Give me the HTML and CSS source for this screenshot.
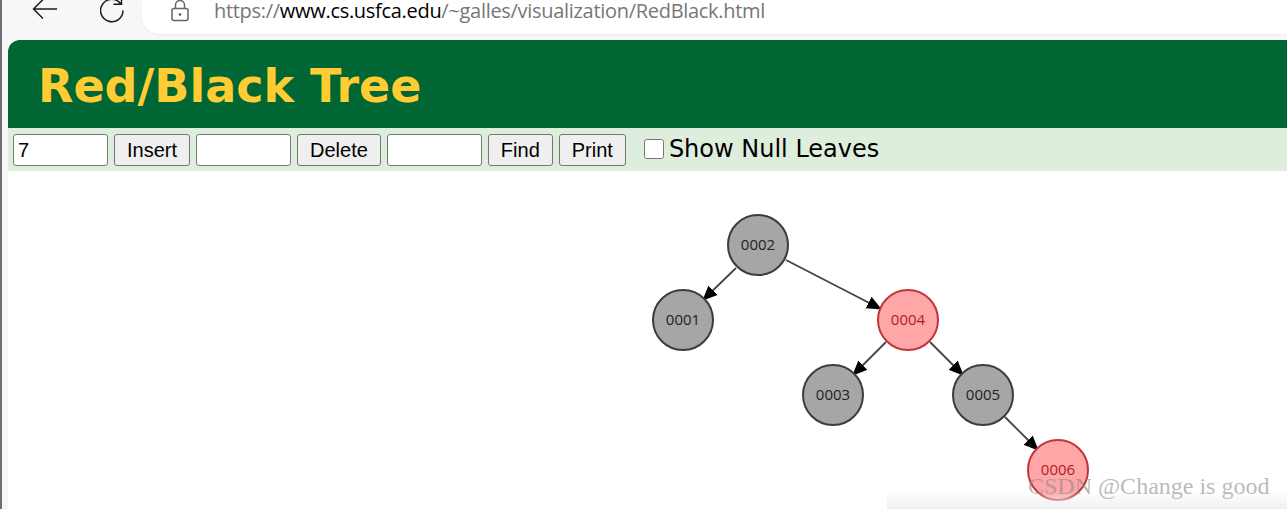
FILE: index.html
```html
<!DOCTYPE html>
<html lang="en">
<head>
<meta charset="utf-8">
<title>Red/Black Tree</title>
<link rel="stylesheet" href="styles.css">
</head>
<body>
<div class="chrome">
  <svg class="nav-icon back" width="28" height="24" viewBox="0 0 28 24"><path d="M1.5 10H25M11 .5 1.5 10l9.500 9.500" fill="none" stroke="#1c1c1c" stroke-width="1.500"/></svg>
  <svg class="nav-icon reload" width="26" height="24" viewBox="0 0 26 24"><path d="M20.500 4.500A11.200 11.200 0 1 0 23 11.500M21.500 -3v8.200h-8" fill="none" stroke="#1c1c1c" stroke-width="1.500"/></svg>
  <div class="address">
    <svg class="lock" width="18" height="22" viewBox="0 0 18 22"><path d="M4.500 8.500V5a4.500 4.500 0 0 1 9 0v3.500" fill="none" stroke="#666" stroke-width="1.500"/><rect x="1" y="8.500" width="16" height="12" rx="2" fill="none" stroke="#666" stroke-width="1.500"/><circle cx="9" cy="14.500" r="1.300" fill="#555"/></svg>
    <span class="url"><span class="dim">https://</span>www.cs.usfca.edu<span class="dim">/~galles/visualization/RedBlack.html</span></span>
  </div>
</div>
<main class="page">
  <header class="banner"><h1>Red/Black Tree</h1></header>
  <form class="controls">
    <input class="field" type="text" value="7">
    <button class="btn" type="button">Insert</button>
    <input class="field" type="text">
    <button class="btn" type="button">Delete</button>
    <input class="field" type="text">
    <button class="btn" type="button">Find</button>
    <button class="btn" type="button">Print</button>
    <label class="toggle"><input class="check" type="checkbox">Show Null Leaves</label>
  </form>
  <div class="stage">
    <svg class="tree" width="1279" height="338" viewBox="8 171 1279 338">
      <defs>
        <marker id="arrow" markerUnits="userSpaceOnUse" markerWidth="16" markerHeight="16" refX="14" refY="8" orient="auto"><path d="M0 1.500 15 8 0 14.500z" fill="#000"/></marker>
      </defs>
      <g class="edges">
        <line x1="736" y1="268" x2="703" y2="300" marker-end="url(#arrow)"/>
        <line x1="786" y1="260" x2="881" y2="309" marker-end="url(#arrow)"/>
        <line x1="886" y1="342" x2="853" y2="375" marker-end="url(#arrow)"/>
        <line x1="930" y1="342" x2="963" y2="375" marker-end="url(#arrow)"/>
        <line x1="1005" y1="417" x2="1038" y2="450" marker-end="url(#arrow)"/>
      </g>
      <g class="node black"><circle cx="758" cy="245" r="30"/><text x="758" y="250">0002</text></g>
      <g class="node black"><circle cx="683" cy="320" r="30"/><text x="683" y="325">0001</text></g>
      <g class="node red"><circle cx="908" cy="320" r="30"/><text x="908" y="325">0004</text></g>
      <g class="node black"><circle cx="833" cy="395" r="30"/><text x="833" y="400">0003</text></g>
      <g class="node black"><circle cx="983" cy="395" r="30"/><text x="983" y="400">0005</text></g>
      <g class="node red"><circle cx="1058" cy="470" r="30"/><text x="1058" y="475">0006</text></g>
    </svg>
    <div class="fade"></div>
    <span class="watermark">CSDN @Change is good</span>
  </div>
</main>
</body>
</html>
```
FILE: styles.css
```css
* { box-sizing: border-box; }
html, body { margin: 0; height: 509px; overflow: hidden; background: #fff; }
body { display: flex; flex-direction: column; border-left: 2px solid #6e6e6e; background: #f7f7f7; }
.chrome { height: 40px; flex: none; display: flex; align-items: flex-start; background: #f7f7f7; position: relative; }
.nav-icon { flex: none; margin-top: -1px; }
.back { margin-left: 30px; }
.reload { margin-left: 40px; margin-top: -1px; }
.address { margin-left: 16px; flex: 1; height: 34px; margin-top: 0; background: #fff; border-bottom-left-radius: 17px; display: flex; align-items: flex-start; padding-left: 29px; box-shadow: 0 1px 2px rgba(0,0,0,.06); }
.lock { flex: none; margin-top: 0; }
.url { margin-left: 25px; margin-top: -2px; font: 20px/26px "Open Sans", sans-serif; letter-spacing: -.3px; color: #000; white-space: nowrap; }
.dim { color: #777; }
.page { flex: 1; margin-left: 6px; background: #fff; display: flex; flex-direction: column; min-height: 0; }
.banner { height: 88px; flex: none; background: #006633; border-top-left-radius: 12px; padding-left: 30px; }
h1 { margin: 0; font: bold 46px/92px "DejaVu Sans", sans-serif; color: #ffcc33; white-space: nowrap; }
.controls { height: 43px; flex: none; background: #ddeedd; display: flex; align-items: flex-start; gap: 6px; padding: 6px 0 0 5px; }
.field { width: 95px; height: 32px; padding: 1px 4px; border: 1px solid #767676; border-radius: 3px; background: #fff; font: 20px "Liberation Sans", sans-serif; color: #000; }
.btn { height: 32px; padding: 0 12px; border: 1px solid #767676; border-radius: 3px; background: #efefef; font: 20px "Liberation Sans", sans-serif; color: #000; }
.toggle { display: flex; align-items: center; margin-left: 6px; margin-top: -3px; font: 24px/36px "DejaVu Sans", sans-serif; color: #000; white-space: nowrap; }
.check { width: 20px; height: 20px; margin: 0 5px 0 6px; accent-color: #fff; }
.stage { flex: 1; position: relative; min-height: 0; overflow: hidden; }
.tree { display: block; }
.edges line { stroke: #444; stroke-width: 1.800; }
.node circle { stroke-width: 2; }
.node text { font: 15px "Open Sans", sans-serif; text-anchor: middle; }
.black circle { fill: #a6a6a6; stroke: #3c3c3c; }
.black text { fill: #222; }
.red circle { fill: #ffa6a6; stroke: #c0353a; }
.red text { fill: #b01c24; }
.fade { position: absolute; right: 0; bottom: 0; width: 400px; height: 18px; background: linear-gradient(to bottom, rgba(240,240,240,0), #f0f0f0); }
.watermark { position: absolute; left: 1020px; top: 302px; font: 24px "Liberation Serif", serif; color: rgba(140,140,140,.6); white-space: nowrap; }
```
